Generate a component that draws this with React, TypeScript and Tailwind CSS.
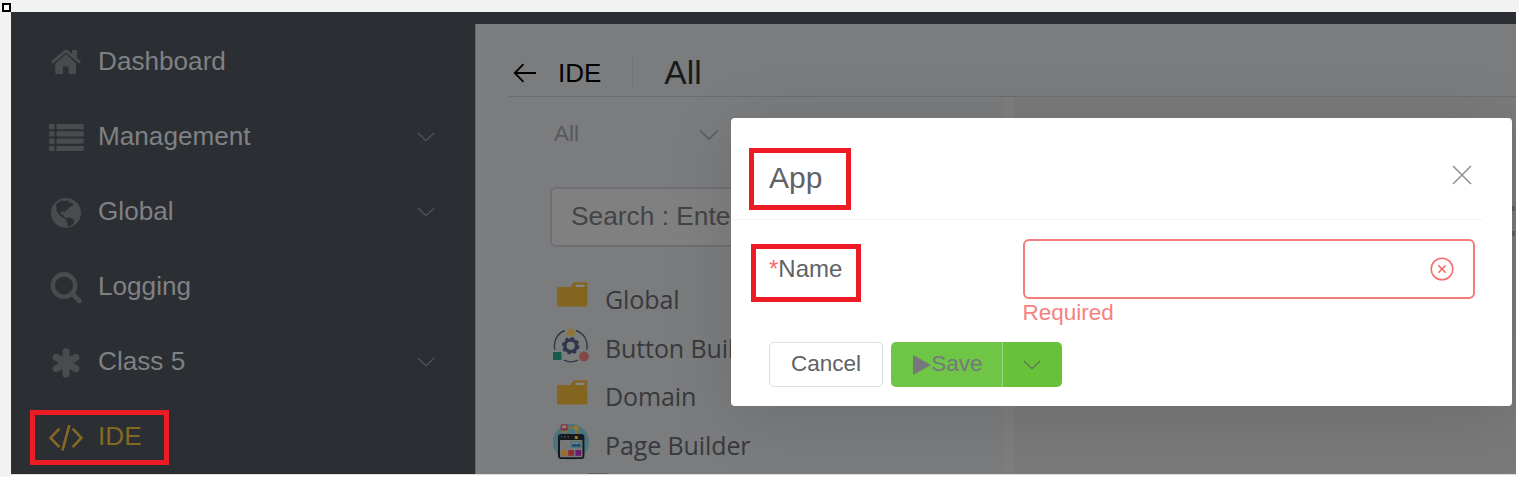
import React from "react";

type IconProps = { className?: string };

const HomeIcon = () => (
  <svg width="34" height="34" viewBox="0 0 34 34" fill="currentColor">
    <path d="M17 8.2 6.3 17.2V26.8Q6.3 28 7.5 28H14V20.5H19.5V28H26Q27 28 27 26.8V17.2Z" />
    <path d="M15.5 4Q17 2.9 18.5 4L23 7.8V4.6Q23 4 23.6 4H27.4Q28 4 28 4.6V11.9L32.2 15.4 30.7 17.3Q30.2 17.7 29.7 17.3L17 6.8 4.3 17.3Q3.8 17.7 3.3 17.3L1.8 15.4Z" />
  </svg>
);

const ListIcon = () => (
  <svg width="36" height="30" viewBox="0 0 36 30" fill="currentColor">
    {[1, 8.3, 15.6, 22.9].map((y) => (
      <g key={y}>
        <rect x="1" y={y} width="5.5" height="5.2" rx="0.7" />
        <rect x="8.5" y={y} width="27.2" height="5.2" rx="0.7" />
      </g>
    ))}
  </svg>
);

const GlobeIcon = () => (
  <svg width="34" height="34" viewBox="0 0 34 34">
    <circle cx="17" cy="17" r="15" fill="currentColor" />
    <g fill="#2b2e33">
      <path d="M6.8 8.5 10 5.7 13.6 4.2 15.4 5.3 18 4.3 20.5 5.1 19.2 7.2 21.8 6.6 24.7 8.2 23 10.2 20.6 10.7 19.8 12.6 17.1 14.2 16 16.5 14 15.2 11.8 16.2 12.1 18.6 14.5 18.8 15 20.7 17.4 22.6 16.3 23.3 13 21 9.7 18.5 7.3 14.2 7.5 11Z" />
      <path d="M17.5 22.2 20 21.4 23.8 22.8 25.5 24.7 24.4 27.8 20.4 30.4 18.3 31 18.8 27.3 17 24.8Z" />
    </g>
  </svg>
);

const SearchIcon = () => (
  <svg width="34" height="34" viewBox="0 0 34 34" fill="none" stroke="currentColor" strokeWidth="4.4">
    <circle cx="15" cy="14.5" r="11.2" />
    <path d="M23.3 22.8 30.3 29.8" strokeWidth="4.8" strokeLinecap="round" />
  </svg>
);

const AsteriskIcon = () => (
  <svg width="34" height="34" viewBox="0 0 34 34" stroke="currentColor" strokeWidth="7" strokeLinecap="round">
    <path d="M17 5.7V28.3M7.1 11.4 26.9 22.6M26.9 11.4 7.1 22.6" />
  </svg>
);

const CodeIcon = () => (
  <svg width="36" height="30" viewBox="0 0 36 30" fill="none" stroke="currentColor" strokeWidth="2.6">
    <path d="M11.4 5.7 2.6 14.9 11.4 24.1M24.6 5.7 33.4 14.9 24.6 24.1M21.3 2.2 14.5 27.4" />
  </svg>
);

const Chevron = ({ className }: IconProps) => (
  <svg className={className} width="22" height="12" viewBox="0 0 22 12" fill="none" stroke="currentColor" strokeWidth="1.5">
    <path d="M2 1.5 11 10 20 1.5" />
  </svg>
);

const FolderIcon = () => (
  <svg className="translate-x-px" width="36" height="36" viewBox="0 0 36 36">
    <path d="M3 8.2Q3 7 4.2 7H16.3L19.2 3Q19.8 2.2 20.8 2.2H32.2Q33.3 2.2 33.3 3.3V25.4Q33.3 26.6 32.1 26.6H4.2Q3 26.6 3 25.4Z" fill="#84651f" />
    <rect x="21.5" y="4.8" width="9.3" height="2.2" rx="1" fill="#878787" />
  </svg>
);

const ButtonBuilderIcon = () => (
  <svg className="mb-1" width="38" height="38" viewBox="0 0 38 38">
    <g fill="none" stroke="#30374a" strokeWidth="1.4">
      <path d="M13 4.5A16 16 0 0 0 3 23.8M24 4.5A16 16 0 0 1 34.6 23.8M12 34.2A16 16 0 0 0 26 34.2" />
      <circle cx="18.7" cy="19.8" r="5.8" strokeWidth="3.4" />
      <circle cx="18.7" cy="19.8" r="7.6" strokeWidth="2.4" strokeDasharray="3.2 2.77" />
    </g>
    <path d="M19 .4 24.3 9.3H13.6Z" fill="#94752f" />
    <rect x="1" y="26" width="8.4" height="8" fill="#16594d" />
    <circle cx="32" cy="30.5" r="4.9" fill="#844849" />
  </svg>
);

const PageBuilderIcon = () => (
  <svg className="mb-1" width="38" height="38" viewBox="0 0 38 38">
    <circle cx="19" cy="19" r="18" fill="#4c7380" />
    <path d="M15 4.5H24.3V16" stroke="#936f25" strokeWidth="1.6" fill="none" />
    <rect x="22.3" y="2.8" width="4" height="4" rx="1" fill="#a4751a" />
    <rect x="8.7" y="1.3" width="7" height="6.3" rx="1.2" fill="#8d3439" />
    <rect x="10.2" y="2.5" width="4" height="2.6" fill="#888" />
    <path d="M8.5 8.2H17L13 10.5Z" fill="#94752f" />
    <rect x="6" y="11" width="26.4" height="25" rx="3" fill="#15181d" />
    <rect x="8" y="17" width="22.5" height="17.2" rx="1" fill="#77787b" />
    <g>
      <circle cx="9.7" cy="13.8" r="0.9" fill="#254982" />
      <circle cx="13" cy="13.8" r="0.9" fill="#18735a" />
      <circle cx="16.3" cy="13.8" r="0.9" fill="#8b2a2a" />
    </g>
    <rect x="18.8" y="18.3" width="10.8" height="6.2" fill="#347466" />
    <rect x="19.9" y="19.2" width="8.8" height="4.6" fill="#758583" />
    <path d="M20 23.8V22L22.5 20.3 24.5 21.7 26.8 20 28.7 22.4V23.8Z" fill="#1c4c7c" />
    <rect x="9" y="27" width="5.8" height="5.8" fill="#9b7122" />
    <rect x="16.2" y="27" width="5.8" height="5.8" fill="#902b35" />
    <rect x="23.4" y="27" width="5.8" height="5.8" fill="#6b1c6b" />
    <rect x="22.8" y="13" width="3" height="3" fill="#a4751a" />
  </svg>
);

const navItems = [
  { label: "Dashboard", icon: <HomeIcon />, expandable: false },
  { label: "Management", icon: <ListIcon />, expandable: true },
  { label: "Global", icon: <GlobeIcon />, expandable: true },
  { label: "Logging", icon: <SearchIcon />, expandable: false },
  { label: "Class 5", icon: <AsteriskIcon />, expandable: true },
  { label: "IDE", icon: <CodeIcon />, expandable: false, active: true },
];

const treeItems = [
  { label: "Global", icon: <FolderIcon /> },
  { label: "Button Builder", icon: <ButtonBuilderIcon /> },
  { label: "Domain", icon: <FolderIcon /> },
  { label: "Page Builder", icon: <PageBuilderIcon /> },
];

function Sidebar() {
  return (
    <nav className="flex w-[464px] shrink-0 flex-col bg-[#2b2e33] pt-[11px]">
      {navItems.map((item) => (
        <div
          key={item.label}
          className={`flex h-[75px] shrink-0 items-center pl-[37px] pr-[39px] ${item.active ? "text-[#856923]" : "text-[#494b4f]"}`}
        >
          <span className="flex w-9 shrink-0 justify-center pt-[5px]">{item.icon}</span>
          <span className={`ml-[14px] flex-1 text-[26.15px] leading-[30px] ${item.active ? "text-[#856923]" : "text-[#808183]"}`}>
            {item.label}
          </span>
          {item.expandable && <Chevron className="mt-[2px] w-5 text-[#505457]" />}
        </div>
      ))}
    </nav>
  );
}

function Workspace() {
  return (
    <main className="flex min-w-0 flex-1 flex-col border-l border-[#66686a] bg-[#7b7c7e]">
      <header className="ml-8 flex h-[73px] shrink-0 items-center border-b border-[#6d6e72] pt-[26px] text-black">
        <svg className="ml-[5px]" width="24" height="20" viewBox="0 0 24 20" fill="none" stroke="currentColor" strokeWidth="1.8">
          <path d="M23 10H2M10.5 1.2 1.7 10 10.5 18.8" />
        </svg>
        <span className="ml-[21px] text-[26px] leading-8">IDE</span>
        <span className="ml-[31px] h-[30px] w-px bg-[#717275]" />
        <span className="ml-[31px] text-[33.5px] leading-9 text-[#191a1c]">All</span>
      </header>
      <div className="flex min-h-0 flex-1">
        <section className="w-[527px] shrink-0 overflow-hidden">
          <div className="ml-[78px] mt-[19px] flex h-9 w-[166px] items-center justify-between text-[#58595d]">
            <span className="text-[22.5px]">All</span>
            <Chevron className="mt-[2px]" />
          </div>
          <div className="ml-[74px] mt-[35px] flex h-[60px] items-center rounded-md border-2 border-[#6e6f75] bg-[#808080] pl-[19px] text-[26.3px] text-[#434446]">
            Search : Enter
          </div>
          <div className="ml-[76px] mt-[27px] flex flex-col font-['Open_Sans','Noto_Sans',sans-serif] text-[25px] tracking-[-0.1px] text-[#38393c]">
            {treeItems.map((item) => (
              <div key={item.label} className="flex h-[48.7px] shrink-0 items-center">
                <span className="flex w-[38px] shrink-0 justify-center">{item.icon}</span>
                <span className="ml-[15px] mt-[3px] whitespace-nowrap">{item.label}</span>
              </div>
            ))}
            <span className="ml-9 mt-[4px] h-3 w-5 shrink-0 bg-[#606164]" />
          </div>
        </section>
        <div className="w-[11px] shrink-0 bg-[#7e7e7e]" />
        <section className="flex flex-1 flex-col items-end gap-[20px] bg-[#7a7a7a] pr-px pt-[109px]">
          <span className="h-[5px] w-[3px] bg-[#5e5f61]" />
          <span className="h-[5px] w-[3px] bg-[#5e5f61]" />
        </section>
      </div>
    </main>
  );
}

function AppDialog() {
  return (
    <div className="absolute left-[720px] top-[106px] flex h-[288px] w-[781px] flex-col rounded bg-white text-[#606266] shadow-[0_10px_70px_rgba(0,0,0,0.12)]">
      <div className="mr-[29px] flex h-[102px] shrink-0 items-center justify-between border-b border-[#f0f6fb] pl-[38px] pr-[11px] pt-[18px]">
        <h2 className="text-[30px] leading-9">App</h2>
        <svg className="-mt-1.5" width="20" height="20" viewBox="0 0 20 20" stroke="#909399" strokeWidth="1.6">
          <path d="M1 1 19 19M19 1 1 19" />
        </svg>
      </div>
      <div className="flex h-[122px] shrink-0 pl-[38px] pr-[37px] pt-[19px]">
        <label className="w-[253.5px] shrink-0 pt-[15px] text-[24px] leading-[30px]">
          <span className="text-[#f56c6c]">*</span>Name
        </label>
        <div className="flex flex-1 flex-col">
          <div className="flex h-[60px] items-center justify-end rounded-md border-2 border-[#f67c7c] pr-[19px]">
            <svg width="24" height="24" viewBox="0 0 24 24" fill="none" stroke="#f56c6c" strokeWidth="1.5">
              <circle cx="12" cy="12" r="10.8" />
              <path d="M8.4 8.4 15.6 15.6M15.6 8.4 8.4 15.6" />
            </svg>
          </div>
          <span className="text-[22.5px] leading-[27px] text-[#f78080]">Required</span>
        </div>
      </div>
      <div className="flex h-[45px] pl-[38px] text-[22.5px] leading-none">
        <button className="w-[114px] rounded-[5px] border border-[#dcdfe6] pb-px">Cancel</button>
        <button className="ml-2 flex w-[111px] items-center justify-center rounded-l-[5px] bg-[#6fc546] pb-px pl-[2px] text-[#76787c]">
          <svg className="mt-[2px]" width="19" height="20" viewBox="0 0 19 20" fill="currentColor">
            <path d="M1 0 19 10 1 20Z" />
          </svg>
          Save
        </button>
        <button className="flex w-[60px] items-center justify-center rounded-r-[5px] border-l border-[#9bd880] bg-[#67c23a] pr-0.5 text-[#5d7358]">
          <Chevron className="w-5" />
        </button>
      </div>
    </div>
  );
}

export default function App() {
  return (
    <div className="relative h-[477px] w-[1519px] overflow-hidden bg-white font-['Liberation_Sans',Arial,sans-serif]">
      <div className="h-3 bg-[#f2f2f2]" />
      <div className="flex h-[465px]">
        <div className="w-[11px] shrink-0 bg-[#f2f2f2]" />
        <div className="relative flex h-[463px] w-[1505px] overflow-hidden border-b border-[#dcdcdc]">
          <Sidebar />
          <div className="flex min-w-0 flex-1 flex-col border-t-12 border-[#2b2e33]">
            <Workspace />
          </div>
          <AppDialog />
        </div>
      </div>
      <div className="absolute left-[2px] top-[3px] size-[9px] border-2 border-black bg-white" />
      <div className="absolute left-[30px] top-[410px] h-[55px] w-[139px] border-5 border-[#ed1c24]" />
      <div className="absolute left-[749px] top-[148px] h-[62px] w-[102px] border-5 border-[#ed1c24]" />
      <div className="absolute left-[751px] top-[244px] h-[58px] w-[110px] border-5 border-[#ed1c24]" />
    </div>
  );
}
